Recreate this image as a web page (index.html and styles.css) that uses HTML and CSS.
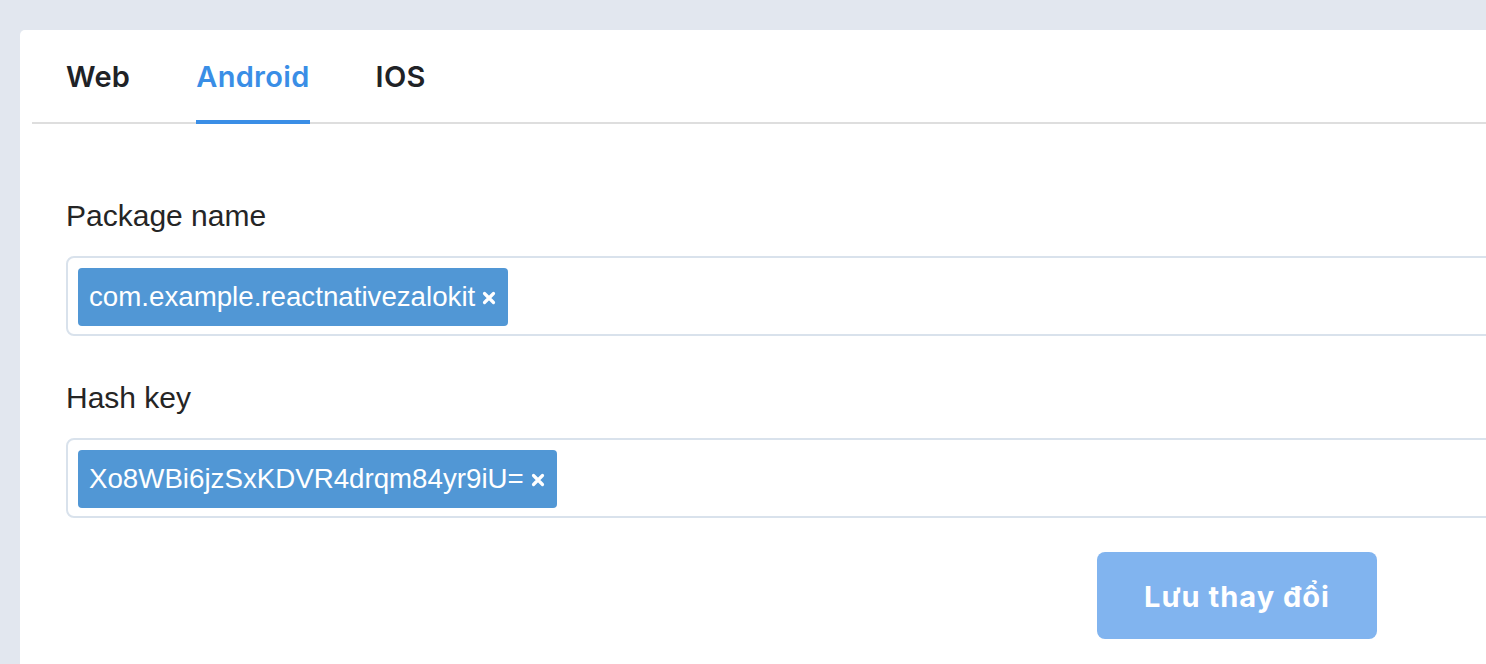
FILE: index.html
```html
<!DOCTYPE html>
<html lang="vi">
<head>
<meta charset="utf-8">
<title>Cài đặt ứng dụng</title>
<link rel="stylesheet" href="styles.css">
</head>
<body>
<div class="card">
  <div class="tabs">
    <div class="tab">Web</div>
    <div class="tab active">Android</div>
    <div class="tab">IOS</div>
  </div>
  <div class="form">
    <div class="field">
      <div class="label">Package name</div>
      <div class="box">
        <span class="tag">com.example.reactnativezalokit<svg class="x" viewBox="0 0 14 14" width="14" height="14"><path d="M2.5 2.5L11.5 11.5M11.5 2.5L2.5 11.5" stroke="#fff" stroke-width="3.2" stroke-linecap="round"/></svg></span>
      </div>
    </div>
    <div class="field">
      <div class="label">Hash key</div>
      <div class="box">
        <span class="tag">Xo8WBi6jzSxKDVR4drqm84yr9iU=<svg class="x" viewBox="0 0 14 14" width="14" height="14"><path d="M2.5 2.5L11.5 11.5M11.5 2.5L2.5 11.5" stroke="#fff" stroke-width="3.2" stroke-linecap="round"/></svg></span>
      </div>
    </div>
    <div class="actions">
      <button class="save">Lưu thay đổi</button>
    </div>
  </div>
</div>
</body>
</html>
```
FILE: styles.css
```css
html, body {
  margin: 0;
  padding: 0;
}
body {
  background: #e2e7ef;
  overflow: hidden;
  height: 664px;
  font-family: "Liberation Sans", Arial, sans-serif;
}
.card {
  margin: 30px 0 0 20px;
  width: 1520px;
  height: 634px;
  background: #ffffff;
  border-radius: 5px 0 0 0;
  padding: 0 12px;
  box-sizing: border-box;
}
.tabs {
  display: flex;
  gap: 66px;
  padding-left: 34px;
  border-bottom: 2px solid #dedede;
}
.tab {
  font-family: Inter, "Liberation Sans", sans-serif;
  font-weight: 600;
  font-size: 29px;
  letter-spacing: 0.3px;
  line-height: 34px;
  color: #202226;
  padding: 30px 0 26px;
  border-bottom: 4px solid transparent;
  margin-bottom: -2px;
}
.tab.active {
  color: #3a8ee6;
  border-bottom-color: #3a8ee6;
}
.form {
  padding: 71px 0 0 34px;
}
.field {
  margin-bottom: 41px;
}
.label {
  font-size: 30px;
  line-height: 42px;
  color: #252525;
  margin-bottom: 19px;
}
.box {
  border: 2px solid #d9e2ec;
  border-radius: 8px;
  padding: 10px 10px 8px;
  display: flex;
}
.tag {
  display: inline-flex;
  align-items: center;
  gap: 7px;
  height: 58px;
  padding: 0 12px 0 11px;
  background: #5197d5;
  color: #ffffff;
  font-size: 27.7px;
  border-radius: 4px;
}
.x {
  display: block;
  margin-top: 2px;
}
.actions {
  width: 1311px;
  display: flex;
  justify-content: flex-end;
  margin-top: -7px;
}
.save {
  width: 280px;
  height: 87px;
  border: none;
  border-radius: 8px;
  background: #81b4ef;
  color: #ffffff;
  font-family: Inter, "Liberation Sans", sans-serif;
  font-weight: 700;
  font-size: 29px;
  letter-spacing: 1px;
  padding: 2px 0 0;
}
```
